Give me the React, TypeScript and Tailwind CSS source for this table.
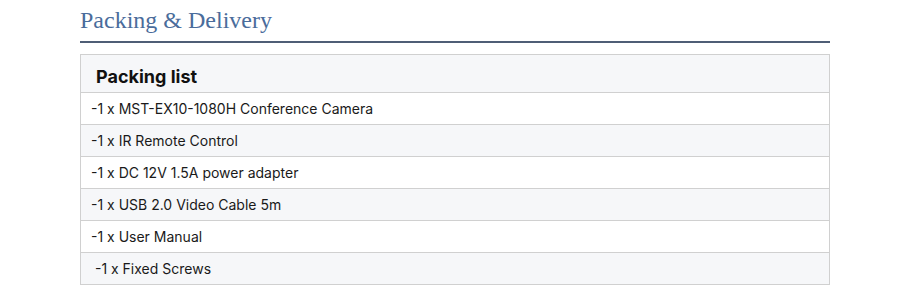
import React from "react";

const rows = [
  "-1 x MST-EX10-1080H Conference Camera",
  "-1 x IR Remote Control",
  "-1 x DC 12V 1.5A power adapter",
  "-1 x USB 2.0 Video Cable 5m",
  "-1 x User Manual",
  "\u00a0-1 x Fixed Screws",
];

export default function App() {
  return (
    <div className="w-[913px] h-[298px] bg-white pt-[5px] px-[80px] pr-[83px]">
      <h2
        className="text-[24px] leading-[30px] text-[#4a6c9b] pb-[6px] border-b-2 border-[#4f5e76]"
        style={{ fontFamily: '"Liberation Serif", serif' }}
      >
        Packing &amp; Delivery
      </h2>
      <div
        className="mt-[11px] border border-[#d0d0d0] text-[#1a1a1a]"
        style={{ fontFamily: "Inter, sans-serif" }}
      >
        <div className="h-[37px] bg-[#f6f7f9] px-[15px] flex items-end pb-[3px] text-[18px] leading-[24px] font-bold text-[#111]">
          Packing list
        </div>
        {rows.map((r, i) => (
          <div
            key={i}
            className={`h-[32px] border-t border-[#d0d0d0] px-[10px] flex items-center text-[14px] ${
              i % 2 === 1 ? "bg-[#f6f7f9]" : "bg-white"
            }`}
          >
            {r}
          </div>
        ))}
      </div>
    </div>
  );
}
